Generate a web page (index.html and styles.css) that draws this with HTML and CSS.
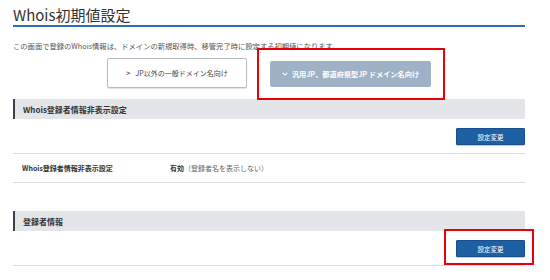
FILE: index.html
```html
<!DOCTYPE html>
<html lang="ja">
<head>
<meta charset="utf-8">
<link rel="stylesheet" href="styles.css">
</head>
<body>
<div class="page">
  <h1 class="title">Whois初期値設定</h1>
  <p class="desc">この画面で登録のWhois情報は、ドメインの新規取得時、移管完了時に設定する初期値になります。</p>
  <div class="tabs">
    <button class="tab tab-out"><span class="chev">&gt;</span>JP以外の一般ドメイン名向け</button>
    <button class="tab tab-on"><svg class="down" viewBox="0 0 8 5" width="6" height="4"><path d="M1 1 L4 4 L7 1" fill="none" stroke="#fff" stroke-width="1.4"/></svg>汎用JP、都道府県型JP ドメイン名向け</button>
  </div>

  <section class="sec sec-first">
    <h2 class="sec-head">Whois登録者情報非表示設定</h2>
    <div class="actions"><button class="btn">設定変更</button></div>
    <div class="row">
      <span class="row-label">Whois登録者情報非表示設定</span>
      <span class="row-value"><b>有効</b>（登録者名を表示しない）</span>
    </div>
  </section>

  <section class="sec sec-second">
    <h2 class="sec-head">登録者情報</h2>
    <div class="actions"><button class="btn">設定変更</button></div>
  </section>
</div>
<div class="mark mark-1"></div>
<div class="mark mark-2"></div>
</body>
</html>
```
FILE: styles.css
```css
* { box-sizing: border-box; }
html, body { margin: 0; padding: 0; background: #fff; }
body {
  font-family: "Noto Sans CJK JP", "Noto Sans", sans-serif;
  color: #333;
  width: 550px;
  height: 280px;
  overflow: hidden;
  position: relative;
}
.page {
  width: 512px;
  margin-left: 13px;
}
.title {
  margin: 0;
  padding-top: 4px;
  font-size: 15px;
  line-height: 21px;
  font-weight: 400;
  color: #333;
  border-bottom: 2px solid #2f6db3;
}
.desc {
  margin: 14px 0 0;
  font-size: 7.3px;
  line-height: 10px;
  color: #555;
}
.tabs {
  display: flex;
  justify-content: center;
  align-items: flex-start;
  gap: 23px;
  margin-top: 7px;
  height: 30px;
}
.tab {
  font-family: inherit;
  cursor: pointer;
  display: flex;
  align-items: center;
  justify-content: center;
  padding: 0;
}
.tab-out {
  width: 140px;
  height: 30px;
  background: #fff;
  border: 1px solid #b9bcc2;
  border-radius: 2px;
  box-shadow: 0 1px 1px rgba(0,0,0,0.12);
  font-size: 7px;
  color: #444;
}
.chev {
  font-weight: 700;
  font-size: 7px;
  margin-right: 5px;
}
.tab-on {
  width: 161px;
  height: 26px;
  margin-top: 3px;
  background: #9fb1c5;
  border: none;
  border-radius: 2px;
  font-size: 7.2px;
  font-weight: 700;
  color: #fff;
}
.down { margin-right: 4px; }
.sec-first { margin-top: 11px; }
.sec-second { margin-top: 28px; }
.sec-head {
  margin: 0;
  height: 20px;
  display: flex;
  align-items: center;
  padding-left: 8px;
  background: #e4e5e9;
  border-left: 2px solid #3a3f4b;
  font-size: 8px;
  font-weight: 700;
  color: #333;
}
.actions {
  display: flex;
  justify-content: flex-end;
  padding: 9px 0 8px;
  border-bottom: 1px solid #d9dade;
}
.btn {
  font-family: inherit;
  width: 69px;
  height: 17px;
  padding: 0;
  background: #1c5fa3;
  border: 1px solid #164f8a;
  border-radius: 1px;
  box-shadow: 0 1px 1px rgba(0,0,0,0.2);
  color: #fff;
  font-size: 6.5px;
  cursor: pointer;
}
.row {
  display: flex;
  align-items: center;
  height: 29px;
  border-bottom: 1px solid #d9dade;
  font-size: 7px;
}
.row-label {
  width: 157px;
  padding-left: 9px;
  font-weight: 700;
  color: #333;
}
.row-value { color: #666; }
.row-value b { color: #333; }
.mark {
  position: absolute;
  border: 2px solid #e8000b;
}
.mark-1 { left: 257px; top: 48px; width: 188px; height: 52px; }
.mark-2 { left: 444px; top: 229px; width: 90px; height: 36px; }
```
